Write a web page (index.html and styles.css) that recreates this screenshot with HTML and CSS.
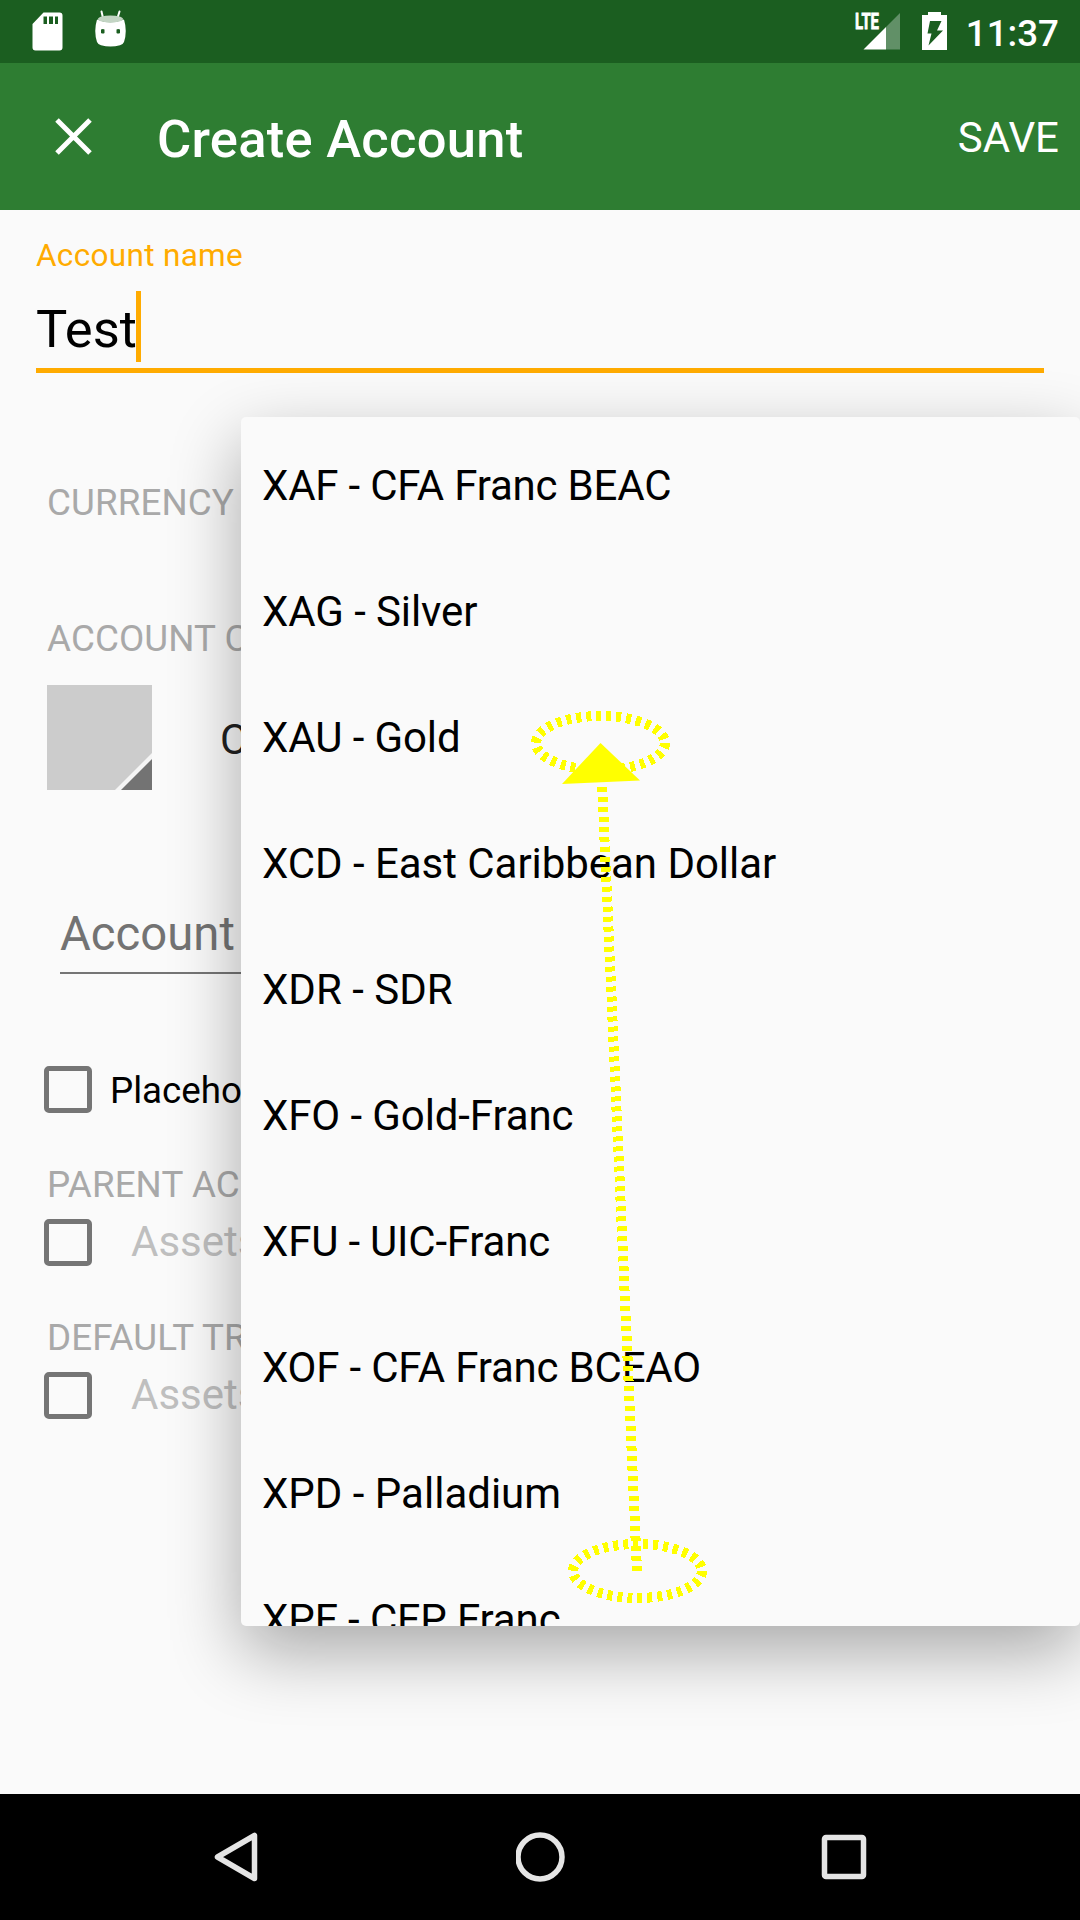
FILE: index.html
```html
<!DOCTYPE html>
<html lang="en">
<head>
<meta charset="utf-8">
<title>Create Account</title>
<link rel="stylesheet" href="styles.css">
</head>
<body>
<div class="screen">
  <header class="status-bar">
    <div class="notifications">
      <svg class="icon-sd" width="31" height="39" viewBox="0 0 31 39"><path fill="#fff" fill-rule="evenodd" d="M11.500 0.500H27.500Q30.500 0.500 30.500 3.500V35.500Q30.500 38.500 27.500 38.500H3.500Q0.500 38.500 0.500 35.500V12ZM11.500 4.500V12H15V4.500ZM17 4.500V12H21V4.500ZM23 4.500V12H26V4.500Z"/></svg>
      <svg class="icon-droid" width="31" height="37" viewBox="0 0 31 37">
        <path d="M6.500 1.500L8 8M24.500 1.500L22.500 8" stroke="#fff" stroke-width="2" stroke-linecap="round"/>
        <path fill="#fff" fill-rule="evenodd" d="M2 9.500Q15 15 29 9.500Q32.500 21 29 32Q28 34.500 25 35.200Q15.500 38 6 35.200Q3 34.500 2 32Q-1.500 21 2 9.500ZM6 19.500V23Q8 24 9.500 23V19.500Q8 18.500 6 19.500ZM21.500 19.500V23Q23 24 25 23V19.500Q23 18.500 21.500 19.500Z"/>
        <ellipse cx="15.500" cy="9" rx="12.500" ry="3.600" fill="#c3d5c4"/>
      </svg>
    </div>
    <div class="indicators">
      <svg class="icon-signal" width="46" height="38" viewBox="0 0 46 38">
        <path fill="#619067" d="M31 15L45 1V37.500H31Z"/><path fill="#fff" d="M31 15V37.500H8.500Z"/>
        <text class="lte" x="0" y="17" textLength="24" lengthAdjust="spacingAndGlyphs">LTE</text>
      </svg>
      <svg class="icon-battery" width="25" height="38" viewBox="0 0 25 38"><path fill="#fff" fill-rule="evenodd" d="M6 0H19V3H25V38H0V3H6ZM8 9L5.500 21.500H9.500L6.500 33.500L21 18.500H15L19.500 9Z"/></svg>
      <span class="clock">11:37</span>
    </div>
  </header>
  <header class="toolbar">
    <svg class="icon-close" width="37" height="37" viewBox="0 0 37 37"><path d="M2 2L35 35M35 2L2 35" stroke="#fff" stroke-width="5"/></svg>
    <h1 class="title">Create Account</h1>
    <span class="save">SAVE</span>
  </header>
  <main class="form">
    <div class="name-label">Account name</div>
    <div class="name-field"><span class="name-value">Test</span><span class="caret"></span></div>
    <div class="section currency">CURRENCY</div>
    <div class="section color-heading">ACCOUNT C</div>
    <div class="color-row">
      <svg width="105" height="105" viewBox="0 0 105 105"><path fill="#ccc" d="M0 0H105V105H0Z"/><path fill="#f5f5f5" d="M68 105L105 68V105Z"/><path fill="#737373" d="M74 105L105 74V105Z"/></svg>
      <span class="type-value">C</span>
    </div>
    <div class="description">Account</div>
    <div class="check-row placeholder"><span class="box"></span><span class="check-label">Placeho</span></div>
    <div class="section parent">PARENT AC</div>
    <div class="check-row"><span class="box"></span><span class="account">Assets</span></div>
    <div class="section parent">DEFAULT TR</div>
    <div class="check-row"><span class="box"></span><span class="account">Assets</span></div>
  </main>
  <nav class="nav-bar">
    <svg width="50" height="50" viewBox="0 0 50 50"><path d="M41.500 3.500V46.500L4.500 25Z" class="nav-line"/></svg>
    <svg width="50" height="50" viewBox="0 0 50 50"><circle cx="24" cy="25" r="22" class="nav-line"/></svg>
    <svg width="50" height="50" viewBox="0 0 50 50"><rect x="5.500" y="5.500" width="39" height="39" rx="1.500" class="nav-line"/></svg>
  </nav>
  <ul class="dropdown">
    <li class="tight">XAF - CFA Franc BEAC</li>
    <li class="snug">XAG - Silver</li>
    <li class="snug">XAU - Gold</li>
    <li class="even">XCD - East Caribbean Dollar</li>
    <li>XDR - SDR</li>
    <li class="snug">XFO - Gold-Franc</li>
    <li class="tight">XFU - UIC-Franc</li>
    <li class="tight">XOF - CFA Franc BCEAO</li>
    <li>XPD - Palladium</li>
    <li class="snug">XPF - CFP Franc</li>
  </ul>
  <svg class="gesture" width="200" height="910" viewBox="520 700 200 910">
    <ellipse cx="600.500" cy="743" rx="64.500" ry="27" class="dash"/>
    <ellipse cx="637.500" cy="1571" rx="64.500" ry="27" class="dash"/>
    <path d="M637 1571L602 783" class="dash"/>
    <path d="M600.500 743L562 784L640 780.500Z" fill="#ff0"/>
  </svg>
</div>
</body>
</html>
```
FILE: styles.css
```css
* { box-sizing: border-box; }
body { margin: 0; font-family: Roboto, sans-serif; color: #000; }
svg { display: block; flex: none; }
.screen { position: relative; width: 1080px; height: 1920px; overflow: hidden; display: flex; flex-direction: column; background: #fafafa; }

.status-bar { height: 63px; background: #1b5e20; display: flex; justify-content: space-between; padding: 0 21px 0 32px; }
.notifications { display: flex; gap: 32px; }
.icon-sd { margin-top: 12px; }
.icon-droid { margin-top: 10px; }
.indicators { display: flex; color: #fff; }
.icon-signal { margin: 12px 21px 0 0; overflow: visible; }
.icon-battery { margin: 12px 19px 0 0; }
.lte { font: 700 22px Roboto, sans-serif; fill: #fff; stroke: #fff; stroke-width: .8px; }
.clock { font-size: 36.75px; font-weight: 500; line-height: 67px; }

.toolbar { height: 147px; background: #2e7d32; color: #fff; display: flex; align-items: center; padding: 0 21px 0 55px; }
.icon-close { margin-right: 65px; }
.title { margin: 0; font-size: 52.5px; font-weight: 500; line-height: 62px; padding-top: 4px; letter-spacing: .26px; }
.save { margin-left: auto; font-size: 42px; line-height: 50px; padding-top: 2px; }

.form { flex: 1; padding: 27px 36px 0; }
.name-label { color: #ffab00; font-size: 31.5px; line-height: 37px; letter-spacing: .32px; }
.name-field { margin-top: 17px; height: 82px; border-bottom: 5px solid #ffab00; display: flex; font-size: 52.5px; }
.name-value { line-height: 76px; margin-right: -1px; }
.caret { width: 5px; height: 71px; background: #ffab00; }
.section { padding-left: 11px; color: #a9a9a9; font-size: 36.75px; line-height: 45px; letter-spacing: .1px; }
.currency { margin-top: 107px; }
.color-heading { margin-top: 91px; }
.color-row { margin: 24px 0 0 11px; height: 105px; display: flex; gap: 68px; }
.type-value { font-size: 42px; line-height: 109px; color: #212121; }
.description { margin: 114px 0 0 24px; padding-bottom: 7px; border-bottom: 2px solid #757575; font-size: 47.25px; line-height: 61px; color: #737373; }
.check-row { height: 47px; margin-left: 8px; display: flex; }
.placeholder { margin-top: 91.5px; }
.box { width: 47.500px; height: 47px; border: 5px solid #757575; border-radius: 5px; }
.check-label { margin-left: 18.500px; font-size: 36.75px; line-height: 49px; }
.account { margin-left: 39.500px; font-size: 42px; line-height: 46px; color: #bfbfbf; }
.parent { margin: 49.500px 0 11.500px; }

.nav-bar { height: 126px; background: #000; display: flex; justify-content: space-between; padding: 38px 211px 0 213px; }
.nav-line { fill: none; stroke: #e5e5e5; stroke-width: 5.500; stroke-linejoin: round; }

.dropdown { position: absolute; left: 241px; top: 417px; width: 839px; height: 1209px; margin: 0; padding: 5px 21px 0; overflow: hidden; list-style: none; background: #fafafa; border-radius: 5px; box-shadow: 0 26px 70px rgba(0, 0, 0, .33); font-size: 42px; }
.dropdown li { height: 126px; line-height: 127px; }
.dropdown .tight { letter-spacing: -.2px; }
.dropdown .snug { letter-spacing: -.1px; }
.dropdown .even { letter-spacing: -.04px; }

.gesture { position: absolute; left: 520px; top: 700px; }
.dash { fill: none; stroke: #ff0; stroke-width: 10; stroke-dasharray: 5 5; shape-rendering: crispEdges; }
```
